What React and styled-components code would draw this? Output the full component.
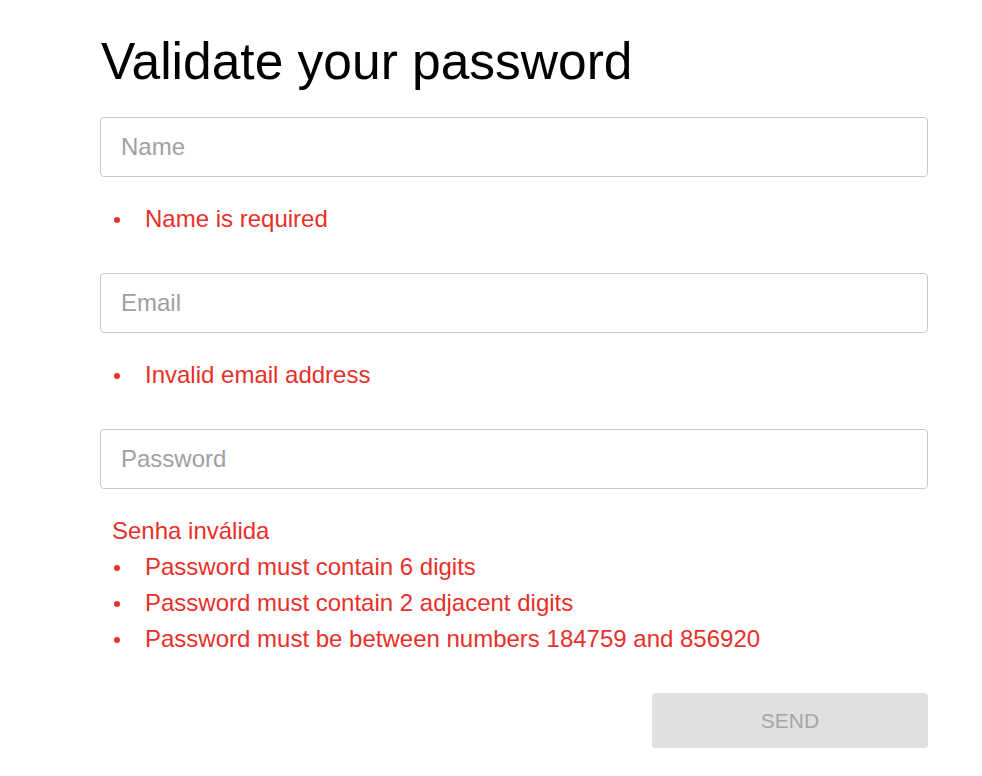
import React from 'react';
import styled, { createGlobalStyle } from 'styled-components';

const GlobalStyle = createGlobalStyle`
  body {
    margin: 0;
    background: #fff;
    font-family: 'Liberation Sans', Arial, Helvetica, sans-serif;
  }
`;

const fields = [
  { name: 'name', placeholder: 'Name', errors: ['Name is required'] },
  { name: 'email', placeholder: 'Email', errors: ['Invalid email address'] },
  {
    name: 'password',
    placeholder: 'Password',
    type: 'password',
    title: 'Senha inválida',
    errors: [
      'Password must contain 6 digits',
      'Password must contain 2 adjacent digits',
      'Password must be between numbers 184759 and 856920',
    ],
  },
];

const App = () => {
  return (
    <>
      <GlobalStyle />
      <Form onSubmit={(e) => e.preventDefault()}>
        <Title>Validate your password</Title>
        {fields.map((field) => (
          <Field key={field.name}>
            <Input
              name={field.name}
              type={field.type || 'text'}
              placeholder={field.placeholder}
            />
            <ErrorBlock>
              {field.title && <ErrorTitle>{field.title}</ErrorTitle>}
              <ErrorList>
                {field.errors.map((err) => (
                  <ErrorItem key={err}>{err}</ErrorItem>
                ))}
              </ErrorList>
            </ErrorBlock>
          </Field>
        ))}
        <Actions>
          <SendButton type='submit' disabled>
            SEND
          </SendButton>
        </Actions>
      </Form>
    </>
  );
};

export default App;

const Form = styled.form`
  width: 828px;
  margin-left: 100px;
  padding-top: 33px;
  display: flex;
  flex-direction: column;
`;

const Title = styled.h1`
  margin: 0 0 27px 1px;
  font-size: 51.5px;
  font-weight: 400;
  color: #000;
  line-height: 57px;
`;

const Field = styled.div`
  display: flex;
  flex-direction: column;
`;

const Input = styled.input`
  box-sizing: border-box;
  width: 100%;
  height: 60px;
  padding: 0 20px;
  border: 1px solid #c8c8c8;
  border-radius: 4px;
  font-family: inherit;
  font-size: 24px;
  color: #333;
  outline: none;
  &::placeholder {
    color: #a0a0a0;
  }
`;

const ErrorBlock = styled.div`
  margin: 24px 0 36px;
  color: #e8302a;
  font-size: 24px;
  line-height: 36px;
`;

const ErrorTitle = styled.div`
  padding-left: 12px;
`;

const ErrorList = styled.ul`
  margin: 0;
  padding: 0;
  list-style: none;
`;

const ErrorItem = styled.li`
  display: flex;
  align-items: center;
  padding-left: 45px;
  position: relative;
  &::before {
    content: '';
    position: absolute;
    left: 14px;
    top: 50%;
    width: 6px;
    height: 6px;
    margin-top: -2px;
    border-radius: 50%;
    background: #e8302a;
  }
`;

const Actions = styled.div`
  display: flex;
  justify-content: flex-end;
`;

const SendButton = styled.button`
  width: 276px;
  height: 55px;
  border: none;
  border-radius: 4px;
  background: #e0e0e0;
  color: #a6a6a6;
  font-family: inherit;
  font-size: 21px;
  cursor: not-allowed;
`;
